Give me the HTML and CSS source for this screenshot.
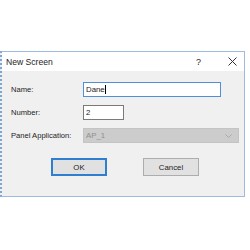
FILE: index.html
```html
<!DOCTYPE html>
<html>
<head>
    <title>New Screen</title>
    <link rel="stylesheet" href="styles.css">
</head>
<body>
    <!-- Dialog -->
    <div class="dialog">
        <div class="titlebar">
            <span class="title">New Screen</span>
            <span class="help">?</span>
            <span class="close">
                <svg width="9" height="9" viewBox="0 0 9 9"><path d="M0.5 0.5 L8.5 8.5 M8.5 0.5 L0.5 8.5" stroke="#333" stroke-width="1" fill="none"/></svg>
            </span>
        </div>
        <div class="form">
            <label>Name:</label>
            <div class="field name-field"><span>Dane</span><span class="caret"></span></div>
            <label>Number:</label>
            <div class="field number-field">2</div>
            <label>Panel Application:</label>
            <div class="field select-field">
                <span>AP_1</span>
                <svg width="7" height="4" viewBox="0 0 7 4"><path d="M0.5 0.5 L3.5 3.5 L6.5 0.5" stroke="#aaa" stroke-width="1" fill="none"/></svg>
            </div>
        </div>
        <div class="buttons">
            <button class="btn default">OK</button>
            <button class="btn">Cancel</button>
        </div>
    </div>
</body>
</html>
```

FILE: styles.css
```css
body { margin: 0; background: #fff; font-family: "Liberation Sans", Arial, sans-serif; color: #222; }
.dialog {
    margin-top: 51px;
    width: 245px;
    height: 146px;
    box-sizing: border-box;
    background: #f0f0f0;
    border: 1px solid #9dbbdf;
    border-left: 2px dotted #7fa5d6;
}
.titlebar {
    height: 19px;
    background: #fff;
    display: flex;
    align-items: center;
    padding-left: 4px;
    font-size: 8.6px;
}
.title { flex: 1; }
.help { width: 32px; font-size: 9px; }
.close { width: 16px; display: flex; }
.form {
    display: grid;
    grid-template-columns: 72px auto;
    row-gap: 8px;
    align-items: center;
    padding: 11px 0 0 9px;
    font-size: 7.6px;
}
.field {
    height: 15px;
    box-sizing: border-box;
    background: #fff;
    border: 1px solid #7a7a7a;
    display: flex;
    align-items: center;
    padding-left: 2px;
    font-size: 7.8px;
}
.name-field { width: 138px; border-color: #4f8fd8; }
.caret { width: 1px; height: 9px; background: #000; }
.number-field { width: 41px; }
.select-field {
    width: 156px;
    background: #cccccc;
    border-color: #c4c4c4;
    color: #8f8f8f;
    justify-content: space-between;
    padding-right: 6px;
}
.buttons {
    display: flex;
    gap: 36px;
    padding: 15px 0 0 49px;
}
.btn {
    width: 56px;
    height: 18px;
    margin: 0;
    padding: 0;
    background: #e1e1e1;
    border: 1px solid #adadad;
    font-family: "Liberation Sans", Arial, sans-serif;
    font-size: 7.8px;
    color: #222;
}
.btn.default { border: 2px solid #2f7fd1; }
```
